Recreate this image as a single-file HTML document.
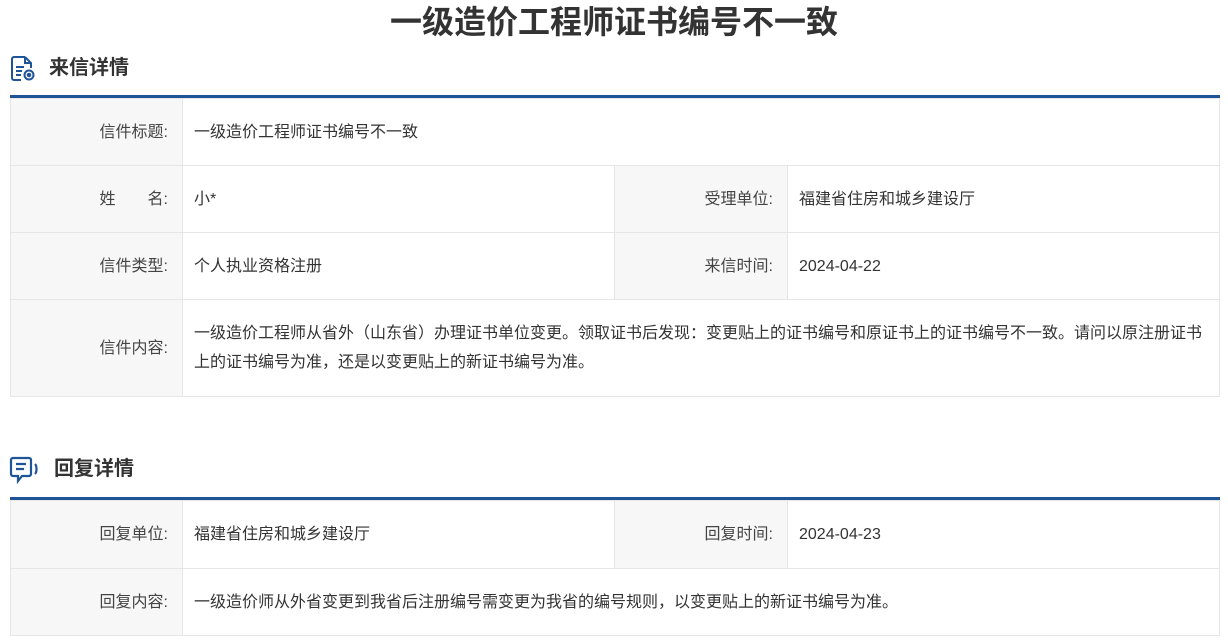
<!DOCTYPE html>
<html><head><meta charset="utf-8"><style>
*{margin:0;padding:0;box-sizing:border-box}
body{width:1228px;height:641px;background:#fff;font-family:"Liberation Sans","Noto Sans CJK SC",sans-serif;color:#333;position:relative;overflow:hidden}
.a{position:absolute}
.title{left:0;width:1228px;top:2px;text-align:center;font-size:32px;font-weight:bold;color:#333;line-height:40px}
.h{font-size:20px;font-weight:bold;color:#333;line-height:28px}
.bar{left:10px;width:1210px;height:3px;background:#1f5497}
.c{position:absolute;border:1px solid #e6e6e6;font-size:16px;display:flex;align-items:center;color:#333;line-height:29px}
.l{background:#f7f7f7;justify-content:flex-end;padding-right:14px;color:#444}
.v{padding-left:11px;padding-right:12px}
</style></head><body>
<div class="a title">一级造价工程师证书编号不一致</div>

<svg class="a" style="left:10px;top:55px" width="27" height="27" viewBox="0 0 27 27" fill="none" stroke="#1f5497" stroke-width="2">
<path d="M15 2H4a2 2 0 0 0-2 2v19a2 2 0 0 0 2 2h7"/><path d="M15 2l6 6v5"/><path d="M15 2v6h6"/>
<path d="M6 12h8M6 16h6M6 20h5"/><circle cx="19" cy="20" r="4.5"/><circle cx="19" cy="20" r="1.3" fill="#1f5497"/></svg>
<div class="a h" style="left:49px;top:54px">来信详情</div>
<div class="a bar" style="top:95px"></div>

<div class="c l" style="left:10px;top:98px;width:173px;height:68px">信件标题:</div>
<div class="c v" style="left:182px;top:98px;width:1038px;height:68px">一级造价工程师证书编号不一致</div>

<div class="c l" style="left:10px;top:165px;width:173px;height:68px">姓&emsp;&emsp;名:</div>
<div class="c v" style="left:182px;top:165px;width:433px;height:68px">小*</div>
<div class="c l" style="left:614px;top:165px;width:174px;height:68px">受理单位:</div>
<div class="c v" style="left:787px;top:165px;width:433px;height:68px">福建省住房和城乡建设厅</div>

<div class="c l" style="left:10px;top:232px;width:173px;height:68px">信件类型:</div>
<div class="c v" style="left:182px;top:232px;width:433px;height:68px">个人执业资格注册</div>
<div class="c l" style="left:614px;top:232px;width:174px;height:68px">来信时间:</div>
<div class="c v" style="left:787px;top:232px;width:433px;height:68px">2024-04-22</div>

<div class="c l" style="left:10px;top:299px;width:173px;height:98px">信件内容:</div>
<div class="c v" style="left:182px;top:299px;width:1038px;height:98px">一级造价工程师从省外（山东省）办理证书单位变更。领取证书后发现：变更贴上的证书编号和原证书上的证书编号不一致。请问以原注册证书上的证书编号为准，还是以变更贴上的新证书编号为准。</div>

<svg class="a" style="left:9px;top:456px" width="32" height="30" viewBox="0 0 32 30" fill="none" stroke="#1f5497" stroke-width="2.2">
<path d="M4 2h16a2 2 0 0 1 2 2v14a2 2 0 0 1-2 2h-7l-4 5v-5H4a2 2 0 0 1-2-2V4a2 2 0 0 1 2-2z"/>
<path d="M7 8h10M7 13h8"/><path d="M26 8c2 2 2 8 0 10"/></svg>
<div class="a h" style="left:54px;top:455px">回复详情</div>
<div class="a bar" style="top:497px"></div>

<div class="c l" style="left:10px;top:500px;width:173px;height:69px">回复单位:</div>
<div class="c v" style="left:182px;top:500px;width:433px;height:69px">福建省住房和城乡建设厅</div>
<div class="c l" style="left:614px;top:500px;width:174px;height:69px">回复时间:</div>
<div class="c v" style="left:787px;top:500px;width:433px;height:69px">2024-04-23</div>

<div class="c l" style="left:10px;top:568px;width:173px;height:68px">回复内容:</div>
<div class="c v" style="left:182px;top:568px;width:1038px;height:68px">一级造价师从外省变更到我省后注册编号需变更为我省的编号规则，以变更贴上的新证书编号为准。</div>
</body></html>
